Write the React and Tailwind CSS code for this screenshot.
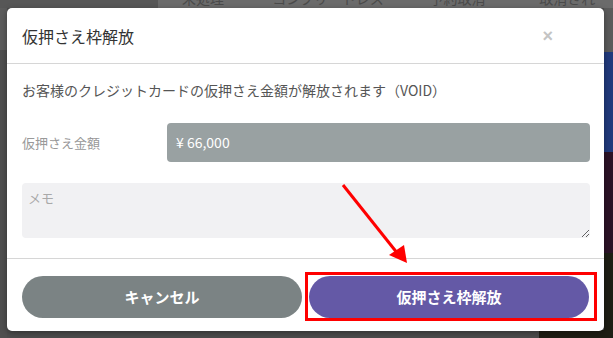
import React from "react";

const jp = { fontFamily: '"Noto Sans CJK JP", "Noto Sans", sans-serif' };

function Background() {
  return (
    <div className="absolute inset-0 flex flex-col bg-[#4d4d4d]">
      <div className="h-[8px] flex shrink-0 overflow-hidden">
        <div className="w-[158px] bg-[#575757]" />
        <div className="flex-1 bg-[#6b6b6b] relative">
          <div className="absolute left-0 right-0 top-[-12px] flex text-[14px] text-[#4a4a4a]">
            <span className="ml-[24px]">未処理 (4)</span>
            <span className="ml-[30px]">コンプリートレス (0)</span>
            <span className="ml-[30px]">予約取消 (0)</span>
            <span className="ml-[36px]">取消され (0)</span>
          </div>
        </div>
      </div>
      <div className="flex-1 flex">
        <div className="w-[7px] flex flex-col">
          <div className="h-[42px] bg-[#5c5c5c]" />
          <div className="flex-1 bg-[#4f4f4f]" />
        </div>
        <div className="flex-1" />
        <div className="w-[9px] flex flex-col">
          <div className="h-[44px] bg-[#5b5b5b]" />
          <div className="h-[100px] bg-[#213a7c]" />
          <div className="h-[101px] bg-[#2c1327]" />
          <div className="flex-1 bg-[#1e1e14]" />
        </div>
      </div>
      <div className="absolute left-[539px] right-0 bottom-0 h-[8px] bg-[#1e1e14]" />
    </div>
  );
}

export default function App() {
  return (
    <div className="relative w-[613px] h-[338px] overflow-hidden" style={jp}>
      <Background />
      <div className="absolute left-[7px] top-[8px] w-[597px] h-[323px] bg-white rounded-[5px] shadow-[0_2px_6px_rgba(0,0,0,0.35)] flex flex-col">
        <div className="h-[56px] shrink-0 flex items-center justify-between pl-[15px] pr-[51px] border-b border-[#d6d6d6]">
          <h1 className="text-[16px] text-[#333] leading-none">仮押さえ枠解放</h1>
          <span className="text-[18px] text-[#c4c4c4] leading-none font-bold" style={{ fontFamily: '"Liberation Sans", sans-serif' }}>×</span>
        </div>
        <div className="flex-1 flex flex-col pl-[15px] pr-[14px] pt-[16px] border-b border-[#d6d6d6]">
          <p className="text-[14px] leading-[20px] text-[#555]">お客様のクレジットカードの仮押さえ金額が解放されます（VOID）</p>
          <div className="mt-[23px] flex items-center">
            <div className="w-[145px] text-[13px] text-[#999]">仮押さえ金額</div>
            <div className="flex-1 h-[39px] rounded-[4px] bg-[#99a1a2] flex items-center px-[9px] text-[14px] text-white">¥ 66,000</div>
          </div>
          <textarea
            className="mt-[21px] h-[55px] w-full rounded-[4px] bg-[#f1f1f3] px-[6px] py-[5px] text-[13px] text-[#555] placeholder:text-[#a9a9a9] outline-none"
            placeholder="メモ"
          />
        </div>
        <div className="h-[72px] shrink-0 flex gap-[7px] pl-[15px] pr-[15px] pt-[17px]">
          <button className="w-[280px] h-[42px] rounded-full bg-[#7b8384] text-white text-[15px] font-bold">キャンセル</button>
          <button className="w-[280px] h-[42px] rounded-full bg-[#6459a6] text-white text-[15px] font-bold">仮押さえ枠解放</button>
        </div>
      </div>
      <div className="absolute left-[305px] top-[272px] w-[292px] h-[49px] border-[3px] border-[#ff0000]" />
      <svg className="absolute inset-0 pointer-events-none" width="613" height="338" viewBox="0 0 613 338">
        <line x1="343" y1="185" x2="398" y2="254" stroke="#ff0000" strokeWidth="3" />
        <polygon points="407,263 389,255 404,245" fill="#ff0000" />
      </svg>
    </div>
  );
}
